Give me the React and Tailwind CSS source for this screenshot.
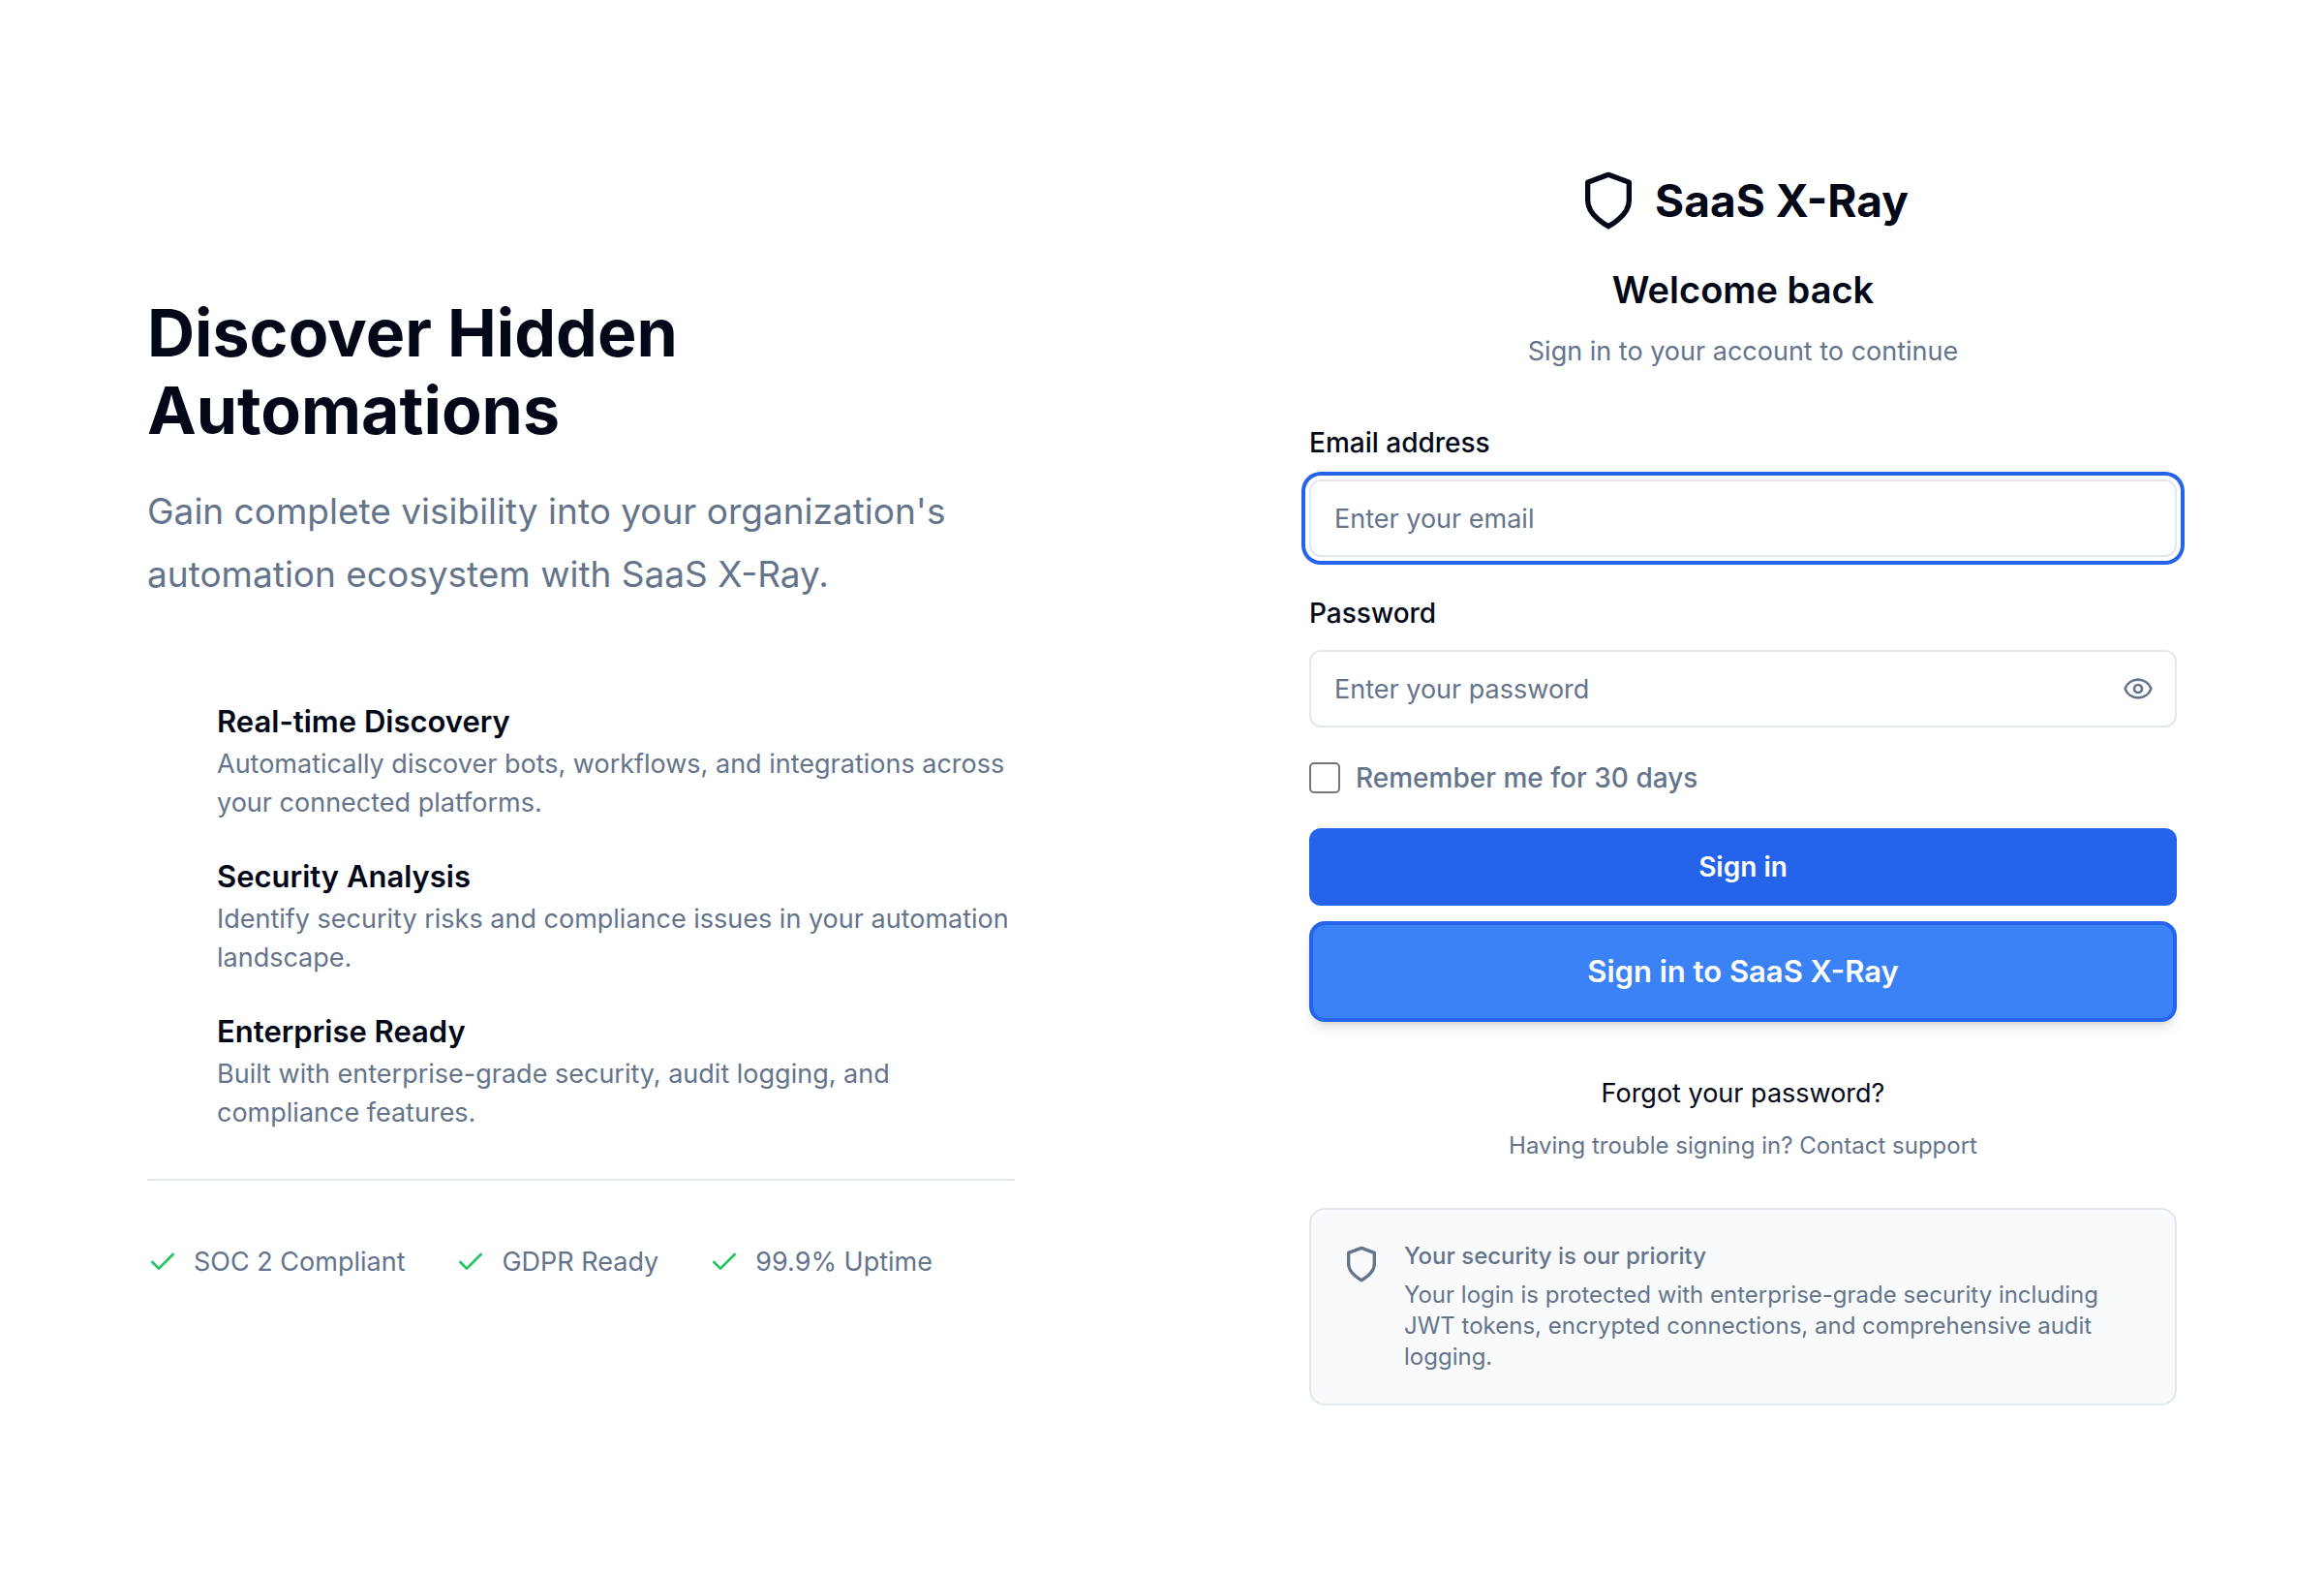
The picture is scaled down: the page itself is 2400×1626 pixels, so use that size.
import { useState } from "react";
import { Check, Eye } from "lucide-react";

const features = [
  {
    title: "Real-time Discovery",
    text: "Automatically discover bots, workflows, and integrations across your connected platforms.",
  },
  {
    title: "Security Analysis",
    text: "Identify security risks and compliance issues in your automation landscape.",
  },
  {
    title: "Enterprise Ready",
    text: "Built with enterprise-grade security, audit logging, and compliance features.",
  },
];

const badges = ["SOC 2 Compliant", "GDPR Ready", "99.9% Uptime"];

function Shield({ className }) {
  return (
    <svg
      viewBox="0 0 24 24"
      fill="none"
      stroke="currentColor"
      strokeWidth="2"
      strokeLinecap="round"
      strokeLinejoin="round"
      aria-hidden="true"
      className={className}
    >
      <path d="M12 22s8-4 8-10V5l-8-3-8 3v7c0 6 8 10 8 10" />
    </svg>
  );
}

function Intro() {
  return (
    <section className="mx-auto w-full max-w-[896px]">
      <h1 className="max-w-[640px] text-[68px] leading-[80px] font-bold">Discover Hidden Automations</h1>
      <p className="mt-8 max-w-[860px] text-[37px] leading-[65px] text-[#64748b]">
        Gain complete visibility into your organization's automation ecosystem with SaaS X-Ray.
      </p>
      <ul className="mt-24 flex flex-col gap-8 pl-[72px]">
        {features.map((f) => (
          <li key={f.title}>
            <h2 className="text-[31px] leading-[48px] font-semibold">{f.title}</h2>
            <p className="text-[27px] leading-10 text-[#64748b]">{f.text}</p>
          </li>
        ))}
      </ul>
      <ul className="mt-12 flex gap-13 border-t-2 border-[#e2e8f0] pt-16 text-[27px] leading-10 text-[#64748b]">
        {badges.map((b) => (
          <li key={b} className="flex items-center gap-4 whitespace-nowrap">
            <Check className="size-8 text-[#22c55e]" aria-hidden="true" />
            {b}
          </li>
        ))}
      </ul>
    </section>
  );
}

function SignIn() {
  const [visible, setVisible] = useState(false);
  return (
    <section className="mx-auto w-full max-w-[896px]">
      <header className="text-center">
        <div className="flex items-center justify-center gap-4">
          <Shield className="size-16" />
          <span className="text-[46px] leading-[64px] font-bold">SaaS X-Ray</span>
        </div>
        <h2 className="mt-8 text-[38px] leading-[56px] font-semibold">Welcome back</h2>
        <p className="mt-4 text-[27px] leading-10 text-[#64748b]">Sign in to your account to continue</p>
      </header>

      <form className="mt-[60px] flex flex-col" onSubmit={(e) => e.preventDefault()}>
        <label htmlFor="email" className="text-[28px] leading-7 font-medium">
          Email address
        </label>
        <input
          id="email"
          type="email"
          placeholder="Enter your email"
          className="mt-6 h-20 w-full rounded-xl border-2 border-[#e2e8f0] bg-white px-6 text-[27px] ring-4 ring-[#2563eb] ring-offset-4 ring-offset-white outline-none placeholder:text-[#64748b]"
        />
        <label htmlFor="password" className="mt-11 text-[28px] leading-7 font-medium">
          Password
        </label>
        <div className="relative mt-6">
          <input
            id="password"
            type={visible ? "text" : "password"}
            placeholder="Enter your password"
            className="h-20 w-full rounded-xl border-2 border-[#e2e8f0] bg-white pr-20 pl-6 text-[27px] outline-none placeholder:text-[#64748b]"
          />
          <button
            type="button"
            aria-label="Show password"
            onClick={() => setVisible(!visible)}
            className="absolute inset-y-0 right-0 flex w-20 items-center justify-center text-[#64748b]"
          >
            <Eye className="size-8" />
          </button>
        </div>
        <div className="mt-9 flex items-center gap-4">
          <input
            id="remember"
            type="checkbox"
            className="size-8 appearance-none rounded-[5px] border-2 border-[#767676] bg-white checked:bg-[#2563eb]"
          />
          <label htmlFor="remember" className="text-[28px] leading-7 font-medium text-[#64748b]">
            Remember me for 30 days
          </label>
        </div>
        <button type="submit" className="mt-9 h-20 rounded-xl bg-[#2563eb] text-[28px] font-semibold text-white">
          Sign in
        </button>
        <button
          type="button"
          className="mt-4 h-[104px] rounded-2xl border-4 border-[#2563eb] bg-[#3b82f6] text-[31px] font-semibold text-white shadow-[0_8px_12px_-2px_rgb(0_0_0/0.1),0_4px_8px_-4px_rgb(0_0_0/0.1)]"
        >
          Sign in to SaaS X-Ray
        </button>
      </form>

      <div className="mt-[54px] flex flex-col items-center gap-[18px]">
        <a href="#forgot" className="text-[27px] leading-10">
          Forgot your password?
        </a>
        <p className="text-2xl text-[#64748b]">
          Having trouble signing in? <a href="#support">Contact support</a>
        </p>
      </div>

      <aside className="mt-12 flex gap-6 rounded-2xl border-2 border-[#e2e8f0] bg-[#f8fafc] p-8 text-[#64748b]">
        <Shield className="mt-1 size-10 shrink-0" />
        <div className="text-2xl">
          <h3 className="font-medium">Your security is our priority</h3>
          <p className="mt-2">
            Your login is protected with enterprise-grade security including JWT tokens, encrypted connections, and
            comprehensive audit logging.
          </p>
        </div>
      </aside>
    </section>
  );
}

export default function App() {
  return (
    <main className="grid min-h-screen grid-cols-2 items-center bg-white font-[Inter,sans-serif] text-[#020817]">
      <Intro />
      <SignIn />
    </main>
  );
}
